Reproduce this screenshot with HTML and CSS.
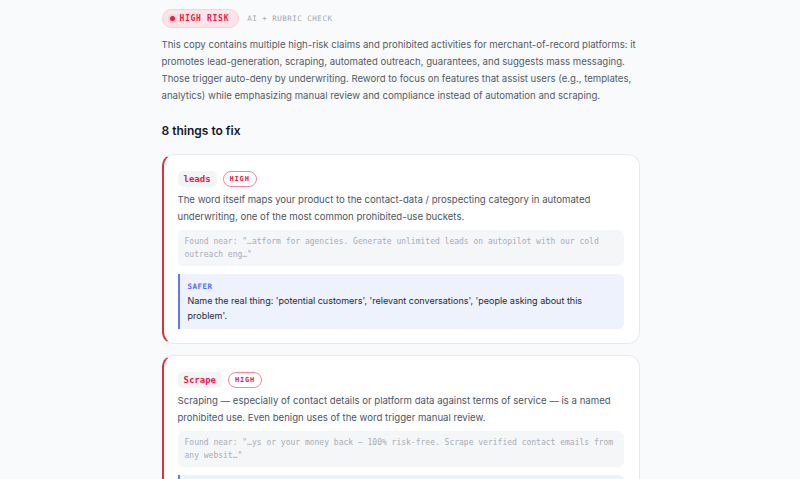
FILE: index.html
```html
<!DOCTYPE html>
<html>
<head>
<meta charset="utf-8">
<link rel="stylesheet" href="styles.css">
</head>
<body>
<main class="page">
  <div class="status">
    <span class="risk"><span class="dot"></span>HIGH RISK</span>
    <span class="method">AI + RUBRIC CHECK</span>
  </div>
  <p class="summary">This copy contains multiple high-risk claims and prohibited activities for merchant-of-record platforms: it promotes lead-generation, scraping, automated outreach, guarantees, and suggests mass messaging. Those trigger auto-deny by underwriting. Reword to focus on features that assist users (e.g., templates, analytics) while emphasizing manual review and compliance instead of automation and scraping.</p>
  <h2 class="count">8 things to fix</h2>
  <section class="card">
    <div class="card-head"><code class="term">leads</code><span class="sev">HIGH</span></div>
    <p class="why">The word itself maps your product to the contact-data / prospecting category in automated underwriting, one of the most common prohibited-use buckets.</p>
    <div class="found">Found near: "…atform for agencies. Generate unlimited leads on autopilot with our cold outreach eng…"</div>
    <div class="safer"><div class="safer-label">SAFER</div><div class="safer-text">Name the real thing: 'potential customers', 'relevant conversations', 'people asking about this problem'.</div></div>
  </section>
  <section class="card">
    <div class="card-head"><code class="term">Scrape</code><span class="sev">HIGH</span></div>
    <p class="why">Scraping — especially of contact details or platform data against terms of service — is a named prohibited use. Even benign uses of the word trigger manual review.</p>
    <div class="found">Found near: "…ys or your money back — 100% risk-free. Scrape verified contact emails from any websit…"</div>
    <div class="safer"><div class="safer-label">SAFER</div><div class="safer-text">Describe what the user does manually: 'find', 'review', 'save'.</div></div>
  </section>
</main>
</body>
</html>
```
FILE: styles.css
```css
html, body { margin: 0; padding: 0; }
body { background: #f9fafb; font-family: Inter, "Noto Sans", sans-serif; color: #4b5563; }
.page { width: 478px; margin: 0 auto; padding-top: 9px; padding-left: 1px; }
.status { display: flex; align-items: center; gap: 8px; height: 19px; }
.risk { box-sizing: border-box; display: inline-flex; align-items: center; gap: 5px; height: 19px; padding: 0 9px 0 7px; border: 1px solid #fbcfd6; background: #fde4e8; border-radius: 10px; font-family: "DejaVu Sans Mono", monospace; font-weight: bold; font-size: 8px; letter-spacing: 0.7px; color: #e11d48; }
.dot { width: 5px; height: 5px; border-radius: 50%; background: #e11d48; box-shadow: 0 0 0 2px #fbcfd6; }
.method { font-family: "DejaVu Sans Mono", monospace; font-size: 7.5px; letter-spacing: 0.5px; color: #a3a8b0; }
.summary { margin: 8px 0 0; font-size: 9.6px; line-height: 17px; color: #525a66; }
.count { margin: 18px 0 14px; font-size: 12px; font-weight: 600; color: #111827; line-height: 18px; }
.card { background: #fff; border: 1px solid #e8eaee; border-left: 2px solid #e0313f; border-radius: 12px; padding: 15px 15px 14px 14px; margin-bottom: 11px; }
.card-head { display: flex; align-items: center; gap: 6px; height: 17px; }
.term { font-family: "DejaVu Sans Mono", monospace; font-weight: bold; font-size: 9px; color: #e11d48; background: #f3f4f6; border-radius: 5px; padding: 0 6px; line-height: 16px; height: 16px; }
.sev { box-sizing: border-box; font-family: "DejaVu Sans Mono", monospace; font-weight: bold; font-size: 7px; letter-spacing: 0.8px; color: #e11d48; border: 1px solid #f3899a; border-radius: 9px; padding: 0 6px; line-height: 14px; height: 16px; }
.why { margin: 4px 0 0; font-size: 9.6px; line-height: 17px; color: #4b5563; }
.found { margin-top: 5px; background: #f5f6f8; border-radius: 6px; padding: 5px 7px; font-family: "DejaVu Sans Mono", monospace; font-size: 8px; line-height: 13px; color: #a8adb6; }
.safer { margin-top: 8px; background: #eef2fd; border-left: 2px solid #6179ef; border-radius: 0 6px 6px 0; padding: 7px 8px 6px; }
.safer-label { font-family: "DejaVu Sans Mono", monospace; font-weight: bold; font-size: 7.5px; letter-spacing: 0.5px; color: #4f6ef7; line-height: 12px; }
.safer-text { font-size: 9px; line-height: 15px; color: #1f2937; }
```
